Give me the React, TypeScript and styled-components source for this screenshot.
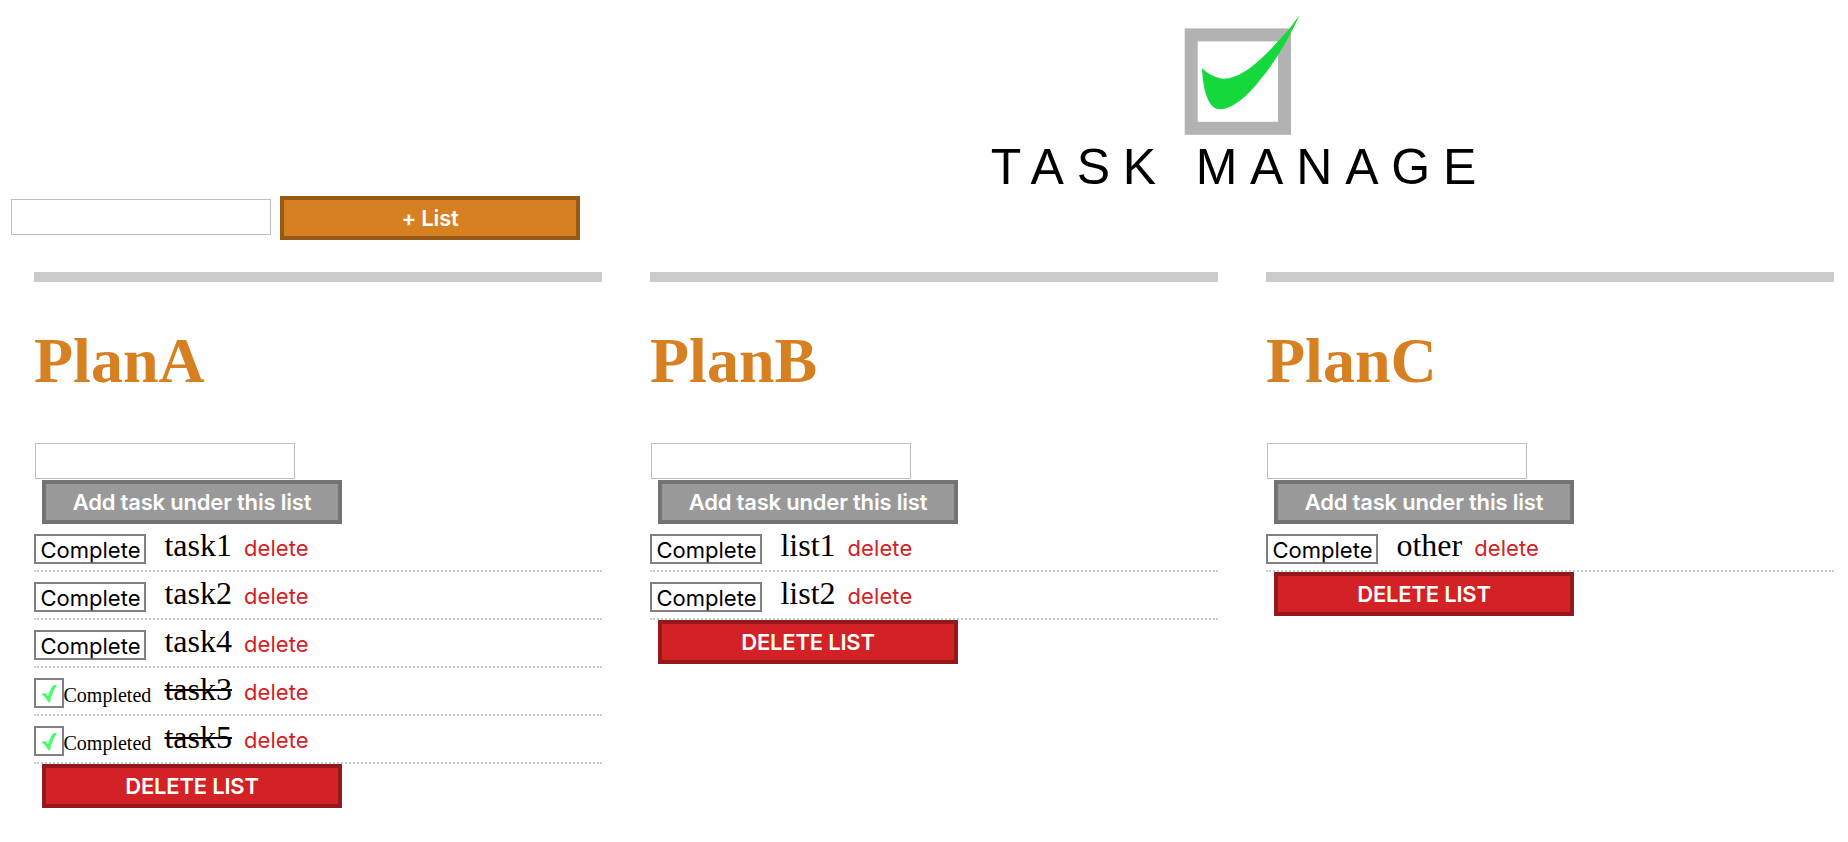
import React from 'react';
import styled, { createGlobalStyle } from 'styled-components';

const GlobalStyle = createGlobalStyle`
  *, *::before, *::after { box-sizing: border-box; }
  body {
    margin: 0;
    background: #fefefe;
    color: #000;
    font-family: 'Liberation Serif', 'Times New Roman', serif;
  }
`;

const Page = styled.div`
  width: 1848px;
  min-height: 842px;
`;

const Header = styled.header`
  display: grid;
  grid-template-columns: 632px 1fr;
  align-items: end;
  height: 240px;
`;

const NewListForm = styled.div`
  display: flex;
  align-items: center;
  padding-left: 11px;
  gap: 9px;

  input { margin-bottom: 2px; }
`;

const TextInput = styled.input`
  display: block;
  width: 260px;
  height: 36px;
  padding: 0 6px;
  border: 1px solid #bebebe;
  border-radius: 0;
  background: #fff;
  font: 22px Inter, sans-serif;
  outline: none;
`;

const tones = {
  orange: { fill: '#d78021', edge: '#965916' },
  gray: { fill: '#999999', edge: '#737373' },
  red: { fill: '#d32226', edge: '#92181b' },
};

const BlockButton = styled.button<{ $tone: keyof typeof tones }>`
  display: block;
  width: 300px;
  height: 44px;
  padding: 0;
  border: 4px solid ${(p) => tones[p.$tone].edge};
  border-radius: 0;
  background: ${(p) => tones[p.$tone].fill};
  color: #fff;
  font: 600 22px/36px Inter, sans-serif;
  letter-spacing: -0.2px;
  text-align: center;
`;

const Brand = styled.div`
  display: flex;
  flex-direction: column;
  align-items: center;
  align-self: start;
  padding-top: 10px;
`;

const Logo = styled.svg`
  display: block;
  width: 120px;
  height: 129px;
  filter: blur(0.5px);
`;

const BrandName = styled.div`
  font: 50px/56px 'Liberation Sans', Helvetica, Arial, sans-serif;
  letter-spacing: 12.8px;
  white-space: nowrap;
`;

const Board = styled.main`
  display: grid;
  grid-template-columns: repeat(3, 568px);
  column-gap: 48px;
  align-items: start;
  padding: 32px 0 0 34px;
`;

const Column = styled.section`
  border-top: 10px solid #cbcbcb;

  > input { margin-left: 1px; }
  > button { margin-left: 8px; }
  > input + button { margin-top: 1px; }
`;

const ListTitle = styled.h1`
  margin: 42px 0 45px;
  color: #d78021;
  font-size: 64px;
  font-weight: 700;
  line-height: 74px;
`;

const Tasks = styled.ul`
  margin: 0;
  padding: 0;
  list-style: none;
`;

const TaskRow = styled.li`
  display: flex;
  align-items: flex-start;
  height: 48px;
  border-bottom: 2px dotted #cbcbcb;
`;

const Status = styled.div`
  display: flex;
  flex: 0 0 130.4px;
  margin-top: 10px;
  height: 30px;
`;

const CompleteButton = styled.button`
  width: 112px;
  height: 30px;
  padding: 1px 0 0 1px;
  border: 2px solid #808080;
  border-radius: 0;
  background: #fff;
  color: #000;
  font: 22px/24px Inter, sans-serif;
`;

const CheckBox = styled.span`
  display: block;
  width: 30px;
  height: 30px;
  border: 2px solid #808080;
  background: #fff;

  svg { display: block; }
`;

const CompletedLabel = styled.span`
  margin-left: -0.5px;
  font-size: 20px;
  line-height: 34px;
`;

const TaskName = styled.span<{ $done?: boolean }>`
  margin-top: 3px;
  font-size: 32px;
  line-height: 36px;
  text-decoration: ${(p) => (p.$done ? 'line-through 2px' : 'none')};
`;

const DeleteTask = styled.button`
  margin: 10px 0 0 12px;
  padding: 0;
  border: 0;
  background: none;
  color: #d32226;
  font: 22px/28px Inter, sans-serif;
  letter-spacing: 0.1px;
`;

interface Task {
  name: string;
  done?: boolean;
}

const lists: { title: string; tasks: Task[] }[] = [
  {
    title: 'PlanA',
    tasks: [
      { name: 'task1' },
      { name: 'task2' },
      { name: 'task4' },
      { name: 'task3', done: true },
      { name: 'task5', done: true },
    ],
  },
  { title: 'PlanB', tasks: [{ name: 'list1' }, { name: 'list2' }] },
  { title: 'PlanC', tasks: [{ name: 'other' }] },
];

function TaskItem({ task }: { task: Task }) {
  return (
    <TaskRow>
      <Status>
        {task.done ? (
          <>
            <CheckBox>
              <svg width="26" height="26" viewBox="0 0 26 26" aria-hidden="true">
                <path
                  d="M5.5 14.3C6.5 13 9 12.7 10.2 14L12 16.6C13 12.5 15.2 7.5 17.2 5.6C18.2 4.8 20 4.7 21 5.1C18.5 8.5 15.5 15 14.2 21.5C13.5 22.6 12.5 22.6 11.9 21.7C10.5 19 9 16.5 5.5 14.3Z"
                  fill="#44ff66"
                />
              </svg>
            </CheckBox>
            <CompletedLabel>Completed</CompletedLabel>
          </>
        ) : (
          <CompleteButton>Complete</CompleteButton>
        )}
      </Status>
      <TaskName $done={task.done}>{task.name}</TaskName>
      <DeleteTask>delete</DeleteTask>
    </TaskRow>
  );
}

export default function App() {
  return (
    <Page>
      <GlobalStyle />
      <Header>
        <NewListForm>
          <TextInput aria-label="New list" />
          <BlockButton $tone="orange">+ List</BlockButton>
        </NewListForm>
        <Brand>
          <Logo viewBox="0 0 120 129" aria-hidden="true">
            <rect x="11.2" y="24.9" width="93.3" height="93.4" fill="none" stroke="#b2b2b2" strokeWidth="13" />
            <path
              d="M22 58.3Q31 67 42 68.7C58 69.5 76 55 93 36.7C99 30 104 25 108.5 20L119.6 5C110 26 96 51 80 70C70 83 54 99 40 99.3C29 99.5 23 82 22 58.3Z"
              fill="#14d83c"
            />
          </Logo>
          <BrandName>TASK MANAGE</BrandName>
        </Brand>
      </Header>
      <Board>
        {lists.map((list) => (
          <Column key={list.title}>
            <ListTitle>{list.title}</ListTitle>
            <TextInput aria-label={`New task in ${list.title}`} />
            <BlockButton $tone="gray">Add task under this list</BlockButton>
            <Tasks>
              {list.tasks.map((task) => (
                <TaskItem key={task.name} task={task} />
              ))}
            </Tasks>
            <BlockButton $tone="red">DELETE LIST</BlockButton>
          </Column>
        ))}
      </Board>
    </Page>
  );
}
